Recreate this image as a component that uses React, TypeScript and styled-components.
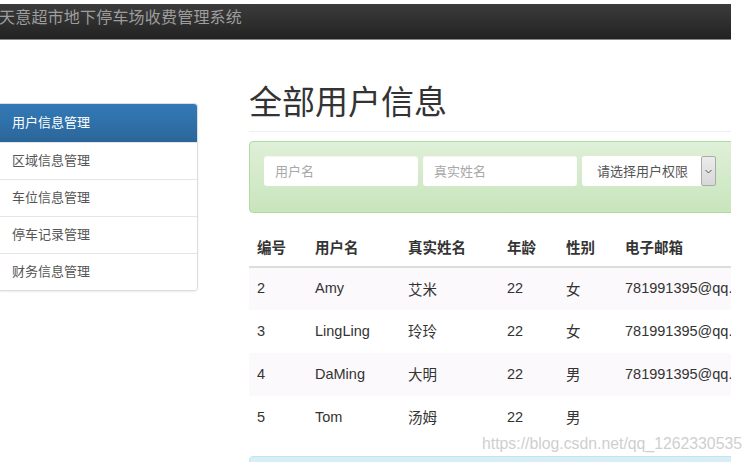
import styled, { createGlobalStyle } from "styled-components";

const GlobalStyle = createGlobalStyle`
  html, body {
    margin: 0;
    padding: 0;
    background: #fff;
    overflow: hidden;
  }
  body {
    font-family: "Liberation Sans", "Noto Sans CJK SC", sans-serif;
    color: #333;
  }
`;

const Page = styled.div`
  position: relative;
  width: 752px;
  height: 462px;
  overflow: hidden;
`;

const Viewport = styled.div`
  width: 731px;
  height: 462px;
  padding-top: 4px;
  box-sizing: border-box;
  overflow: hidden;
`;

const NavBar = styled.div`
  height: 36px;
  box-sizing: border-box;
  display: flex;
  align-items: flex-start;
  padding-top: 4px;
  background: linear-gradient(to bottom, #3c3c3c 0%, #222 100%);
  border-bottom: 1px solid #8a8a8a;
`;

const Brand = styled.span`
  margin-left: -1px;
  font-size: 16px;
  line-height: 20px;
  letter-spacing: 0.2px;
  color: #9d9d9d;
`;

const Body = styled.div`
  display: flex;
  align-items: flex-start;
`;

const SideNav = styled.div`
  flex: 0 0 197px;
  margin-top: 63px;
  border: 1px solid #ddd;
  border-left: none;
  border-radius: 0 4px 4px 0;
  box-shadow: 0 1px 2px rgba(0, 0, 0, 0.075);
  overflow: hidden;
`;

const SideItem = styled.div<{ $active?: boolean }>`
  display: flex;
  align-items: center;
  padding: 0 0 3px 12px;
  font-size: 13px;
  color: ${(p) => (p.$active ? "#fff" : "#555")};
  background: ${(p) =>
    p.$active ? "linear-gradient(to bottom, #337ab7 0%, #2b669a 100%)" : "#fff"};
  border-top: ${(p) => (p.$active ? "none" : "1px solid #e5e5e5")};
  height: ${(p) => (p.$active ? "38px" : "37px")};
  box-sizing: border-box;
`;

const Main = styled.div`
  margin-left: 51px;
  width: 540px;
  flex: 0 0 540px;
`;

const Title = styled.h1`
  margin: 0;
  padding-top: 45px;
  padding-bottom: 10px;
  font-size: 33px;
  font-weight: normal;
  line-height: 36px;
  color: #333;
  border-bottom: 1px solid #eee;
`;

const FilterPanel = styled.div`
  margin-top: 9px;
  height: 72px;
  box-sizing: border-box;
  padding: 14px 14px;
  display: flex;
  gap: 5px;
  background: linear-gradient(to bottom, #dff0d8 0%, #c8e5bc 100%);
  border: 1px solid #b2dba1;
  border-radius: 4px;
`;

const TextInput = styled.div`
  width: 154px;
  height: 30px;
  box-sizing: border-box;
  display: flex;
  align-items: center;
  padding: 0 0 2px 11px;
  background: #fff;
  border-radius: 3px;
  font-size: 13px;
  color: #a8a8a8;
  box-shadow: inset 0 1px 1px rgba(0, 0, 0, 0.04);
`;

const SelectBox = styled.div`
  width: 134px;
  height: 30px;
  display: flex;
  background: #fff;
  border-radius: 3px;
`;

const SelectLabel = styled.div`
  flex: 1;
  display: flex;
  align-items: center;
  padding: 0 0 2px 15px;
  font-size: 13px;
  color: #555;
`;

const SelectArrow = styled.div`
  width: 15px;
  display: flex;
  align-items: center;
  justify-content: center;
  box-sizing: border-box;
  border: 1px solid #aaa;
  border-radius: 2px;
  background: linear-gradient(to bottom, #ececec, #d8d8d8);
`;

const Table = styled.table`
  margin-top: 16px;
  width: 100%;
  border-collapse: collapse;
  font-size: 14.5px;
`;

const HeadCell = styled.th<{ $w?: number }>`
  width: ${(p) => (p.$w ? `${p.$w}px` : "auto")};
  text-align: left;
  font-weight: bold;
  font-size: 14.5px;
  padding: 0 8px 2px;
  height: 38px;
  border-bottom: 2px solid #ddd;
  box-sizing: border-box;
`;

const Row = styled.tr<{ $striped?: boolean }>`
  background: ${(p) => (p.$striped ? "#fbf9fb" : "#fff")};
  & + & td {
    border-top: 1px solid #e3e3e3;
  }
`;

const Cell = styled.td`
  box-sizing: border-box;
  padding: 0 8px 2px;
  height: 43px;
  white-space: nowrap;
  color: #333;
`;

const InfoPanel = styled.div`
  margin-top: 17px;
  height: 40px;
  background: #d9edf7;
  border: 1px solid #bce8f1;
  border-radius: 4px;
`;

const Watermark = styled.div`
  position: absolute;
  left: 482px;
  top: 435px;
  font-size: 15.8px;
  color: #cfcfcf;
  white-space: nowrap;
`;

const users = [
  { id: 2, name: "Amy", real: "艾米", age: 22, sex: "女", mail: "781991395@qq.com" },
  { id: 3, name: "LingLing", real: "玲玲", age: 22, sex: "女", mail: "781991395@qq.com" },
  { id: 4, name: "DaMing", real: "大明", age: 22, sex: "男", mail: "781991395@qq.com" },
  { id: 5, name: "Tom", real: "汤姆", age: 22, sex: "男", mail: "" },
];

const menu = ["用户信息管理", "区域信息管理", "车位信息管理", "停车记录管理", "财务信息管理"];

export default function App() {
  return (
    <>
      <GlobalStyle />
      <Page>
        <Viewport>
          <NavBar>
            <Brand>天意超市地下停车场收费管理系统</Brand>
          </NavBar>
          <Body>
            <SideNav>
              {menu.map((m, i) => (
                <SideItem key={m} $active={i === 0}>
                  {m}
                </SideItem>
              ))}
            </SideNav>
            <Main>
              <Title>全部用户信息</Title>
              <FilterPanel>
                <TextInput>用户名</TextInput>
                <TextInput>真实姓名</TextInput>
                <SelectBox>
                  <SelectLabel>请选择用户权限</SelectLabel>
                  <SelectArrow>
                    <svg width="7" height="5" viewBox="0 0 7 5">
                      <path d="M0.5 1 L3.5 4 L6.5 1" fill="none" stroke="#555" strokeWidth="1" />
                    </svg>
                  </SelectArrow>
                </SelectBox>
              </FilterPanel>
              <Table>
                <thead>
                  <tr>
                    <HeadCell $w={58}>编号</HeadCell>
                    <HeadCell $w={93}>用户名</HeadCell>
                    <HeadCell $w={99}>真实姓名</HeadCell>
                    <HeadCell $w={59}>年龄</HeadCell>
                    <HeadCell $w={59}>性别</HeadCell>
                    <HeadCell>电子邮箱</HeadCell>
                  </tr>
                </thead>
                <tbody>
                  {users.map((u, i) => (
                    <Row key={u.id} $striped={i % 2 === 0}>
                      <Cell>{u.id}</Cell>
                      <Cell>{u.name}</Cell>
                      <Cell>{u.real}</Cell>
                      <Cell>{u.age}</Cell>
                      <Cell>{u.sex}</Cell>
                      <Cell>{u.mail}</Cell>
                    </Row>
                  ))}
                </tbody>
              </Table>
              <InfoPanel />
            </Main>
          </Body>
        </Viewport>
        <Watermark>https://blog.csdn.net/qq_1262330535</Watermark>
      </Page>
    </>
  );
}
